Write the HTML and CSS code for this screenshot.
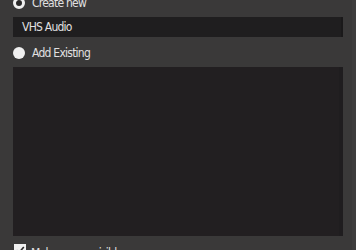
FILE: index.html
```html
<!DOCTYPE html>
<html>
<head>
<meta charset="utf-8">
<link rel="stylesheet" href="styles.css">
</head>
<body>
<div class="dialog">
  <div class="content">
    <label class="radio-row first">
      <span class="radio checked"></span>
      <span class="label">Create new</span>
    </label>
    <div class="text-input">VHS Audio</div>
    <label class="radio-row">
      <span class="radio"></span>
      <span class="label">Add Existing</span>
    </label>
    <div class="list-box"></div>
    <label class="check-row">
      <span class="checkbox">
        <svg width="12" height="12" viewBox="0 0 12 12"><path d="M2.5 6.2 L5 8.7 L9.8 3" fill="none" stroke="#2a2929" stroke-width="1.6"/></svg>
      </span>
      <span class="label">Make source visible</span>
    </label>
  </div>
  <div class="edge"></div>
</div>
</body>
</html>
```
FILE: styles.css
```css
html, body {
  margin: 0;
  padding: 0;
  background: #3a3939;
  overflow: hidden;
}
.dialog {
  display: flex;
  align-items: flex-start;
  width: 356px;
  height: 250px;
  overflow: hidden;
  font-family: "DejaVu Sans Condensed", "Noto Sans", sans-serif;
  font-stretch: condensed;
  font-size: 12px;
  letter-spacing: -0.75px;
  color: #e1e0e1;
}
.content {
  width: 330px;
  padding: 0 9px 0 13px;
  display: flex;
  flex-direction: column;
  flex: none;
}
.content > * {
  flex: none;
}
.edge {
  width: 4px;
  height: 250px;
  margin-left: auto;
  background: #3e3d3d;
}
.radio-row {
  display: flex;
  align-items: center;
  gap: 7px;
  height: 14px;
  margin-top: 9px;
}
.radio-row.first {
  margin-top: -4px;
}
.radio {
  width: 12px;
  height: 12px;
  border-radius: 50%;
  background: #f0f0f0;
  box-sizing: border-box;
}
.radio.checked {
  background: #2a2929;
  border: 3px solid #f0f0f0;
}
.label {
  line-height: 14px;
  white-space: nowrap;
}
.text-input {
  margin-top: 7px;
  height: 20px;
  line-height: 20px;
  box-sizing: border-box;
  padding-left: 9px;
  background: #1f1e1f;
  border-right: 2px solid #1a191a;
}
.list-box {
  margin-top: 7px;
  height: 169px;
  background: #221f21;
  border-right: 4px solid #1f1d1f;
  box-sizing: border-box;
}
.check-row {
  display: flex;
  align-items: flex-start;
  gap: 5px;
  margin-top: 8px;
  margin-left: 1px;
}
.checkbox {
  width: 12px;
  height: 12px;
  background: #f0f0f0;
  flex: none;
  display: block;
}
.checkbox svg {
  display: block;
}
.check-row .label {
  margin-top: 2px;
}
```
